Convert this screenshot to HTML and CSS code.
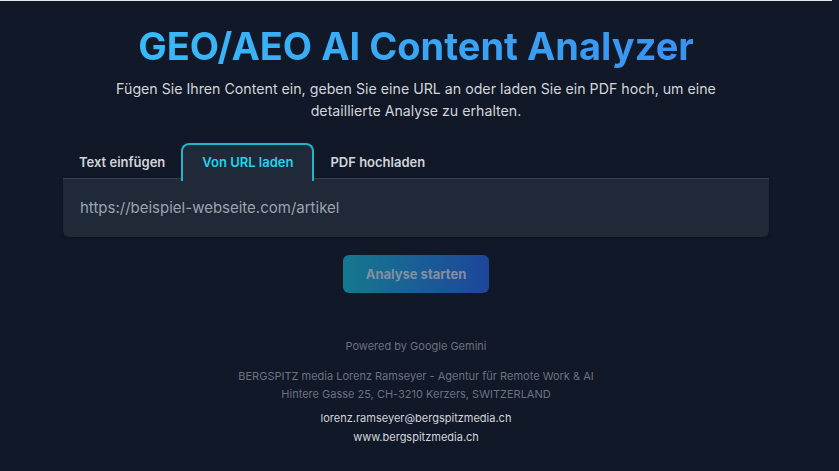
FILE: index.html
```html
<!DOCTYPE html>
<html lang="de">
<head>
<meta charset="UTF-8">
<title>GEO/AEO AI Content Analyzer</title>
<link rel="stylesheet" href="styles.css">
</head>
<body>
<div class="topline"></div>
<div class="wrap">
  <h1 class="title">GEO/AEO AI Content Analyzer</h1>
  <p class="sub">Fügen Sie Ihren Content ein, geben Sie eine URL an oder laden Sie ein PDF hoch, um eine detaillierte Analyse zu erhalten.</p>

  <div class="tabs">
    <button class="tab">Text einfügen</button>
    <button class="tab active">Von URL laden</button>
    <button class="tab">PDF hochladen</button>
  </div>
  <div class="panel">
    <input class="url-input" type="url" placeholder="https://beispiel-webseite.com/artikel">
  </div>

  <div class="actions">
    <button class="start-btn" disabled>Analyse starten</button>
  </div>

  <footer class="foot">
    <p class="powered">Powered by Google Gemini</p>
    <p class="addr">BERGSPITZ media Lorenz Ramseyer - Agentur für Remote Work &amp; AI<br>Hintere Gasse 25, CH-3210 Kerzers, SWITZERLAND</p>
    <p class="contact"><a href="#">lorenz.ramseyer@bergspitzmedia.ch</a><br><a href="#">www.bergspitzmedia.ch</a></p>
  </footer>
</div>
</body>
</html>
```

FILE: styles.css
```css
:root{
  --bg: #111827;
  --panel: #1f2937;
  --line: #374151;
  --text: #d1d5db;
  --text-dim: #9ca3af;
  --muted: #6b7280;
  --cyan: #22d3ee;
  --cyan-border: #1fb5cc;
  --sans: Inter, "Noto Sans", "Liberation Sans", sans-serif;
}
*{ box-sizing: border-box; }
html,body{
  margin:0; padding:0; background:var(--bg); color:var(--text);
  font-family: var(--sans);
  height:100%; overflow:hidden;
}
body{ padding-right: 7px; }
.topline{ height: 1px; background: #e5e7eb; }
.wrap{ max-width: 706px; margin: 0 auto; padding: 21px 0 0; }

.title{
  margin: 0 -40px; text-align: center; font-size: 38px; line-height: 48px; font-weight: 700;
  background: linear-gradient(90deg, #38bdf8 10%, #3b8ff0 90%);
  -webkit-background-clip: text; background-clip: text; color: transparent;
}
.sub{
  margin: 8px auto 0; max-width: 620px; text-align: center;
  font-size: 14.2px; line-height: 22px; color: var(--text);
}

.tabs{ display:flex; margin-top: 21px; }
.tab{
  background: transparent; border: 2px solid transparent; border-bottom: 0;
  border-radius: 8px 8px 0 0; padding: 0 14px 2px; height: 38px;
  font-family: var(--sans); font-size: 13px; font-weight: 600; color: var(--text);
  cursor: pointer; margin-bottom: -3px; position: relative; z-index: 1;
}
.tab.active{
  color: var(--cyan); border-color: var(--cyan-border); background: var(--panel);
  padding: 0 19px 2px;
}
.panel{
  background: var(--panel); border-top: 1px solid var(--line);
  border-radius: 0 0 6px 6px; padding: 16px 16px;
  box-shadow: 0 1px 3px rgba(0,0,0,0.3);
}
.url-input{
  width: 100%; background: transparent; border: 0; outline: none;
  font-family: var(--sans); font-size: 15px; line-height: 24px; padding: 1px 1px;
  color: var(--text);
}
.url-input::placeholder{ color: var(--text-dim); }

.actions{ display:flex; justify-content:center; margin-top: 18px; }
.start-btn{
  width: 146px; height: 38px; border: 0; border-radius: 6px;
  background: linear-gradient(90deg, #15788f, #1e469b);
  font-family: var(--sans); font-size: 13px; font-weight: 700; color: #8390a3;
  cursor: not-allowed;
}

.foot{ text-align: center; font-size: 11px; margin-top: 46px; }
.foot p{ margin: 0; }
.powered{ color: var(--muted); }
.addr{ color: var(--muted); line-height: 18px; margin-top: 14px !important; }
.contact{ line-height: 19px; margin-top: 6px !important; }
.contact a{ color: var(--text); text-decoration: none; }
```
